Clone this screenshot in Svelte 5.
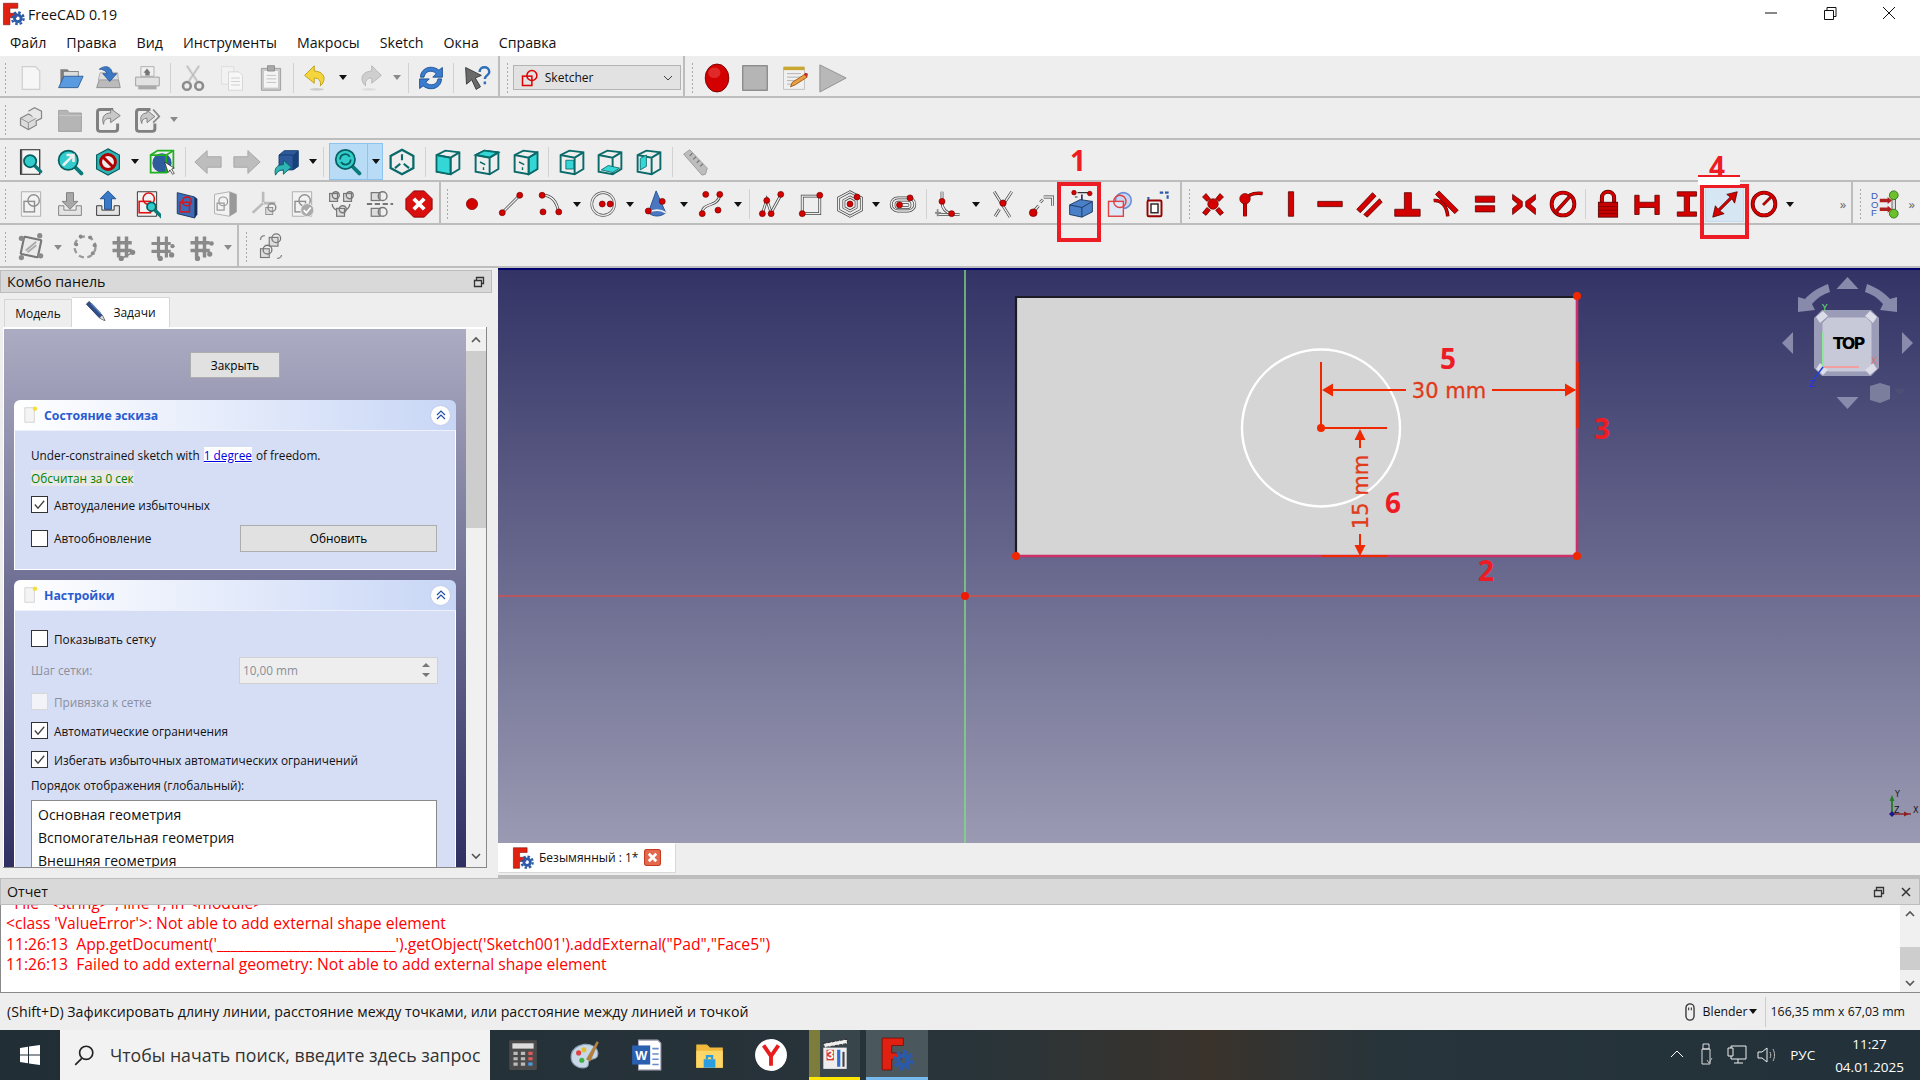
<script>
  const RED = '#d40000';
  const dot = (x, y, r = 3.4) =>
    `<circle cx="${x}" cy="${y}" r="${r}" fill="${RED}" stroke="#7a0000" stroke-width=".8"/>`;
  // sketch geometry: pale stroke with a dark rim
  const geo = (d) =>
    `<path d="${d}" fill="none" stroke="#444" stroke-width="3.2"/><path d="${d}" fill="none" stroke="#eee" stroke-width="1.6"/>`;
  const con = (d) => `<path d="${d}" fill="${RED}" stroke="#5a0000" stroke-width=".9"/>`;
  const conLine = (d, w = 3.4) =>
    `<path d="${d}" fill="none" stroke="#5a0000" stroke-width="${w + 1.2}"/><path d="${d}" fill="none" stroke="${RED}" stroke-width="${w}"/>`;

  const page = (extra = '', stroke = '#a8a8a8') =>
    `<path d="M5 2h22v28H5z" fill="#f2f2f2" stroke="${stroke}"/>${extra}`;
  const sketchMark = (c = '#8f8f8f', bg = 'none') =>
    `<rect x="8" y="13" width="12" height="12" fill="${bg}" stroke="${c}" stroke-width="1.6"/><circle cx="19" cy="12" r="6.5" fill="none" stroke="${c}" stroke-width="1.6"/>`;
  const lens = (x = 16, y = 14) =>
    `<path d="M${x + 5} ${y + 5}l7 7" stroke="#0a7a7a" stroke-width="4" stroke-linecap="round"/><circle cx="${x}" cy="${y}" r="7" fill="#3cc" stroke="#075f5f" stroke-width="2"/>`;
  const tealBox = (front, top, side) =>
    `<path d="M3 8 13 3l16 2v19l-10 6-16-3z" fill="#eee" stroke="#0a6a6a" stroke-width="2.2"/>` +
    (front ? `<path d="M3 8l16 3v19l-16-3z" fill="#35d6d6" stroke="#0a6a6a" stroke-width="1.8"/>` : '') +
    (top ? `<path d="M3 8 13 3l16 2-10 6z" fill="#35d6d6" stroke="#0a6a6a" stroke-width="1.8"/>` : '') +
    (side ? `<path d="M19 11l10-6v19l-10 6z" fill="#35d6d6" stroke="#0a6a6a" stroke-width="1.8"/>` : '') +
    `<path d="M3 8l16 3 10-6M19 11v19" fill="none" stroke="#0a6a6a" stroke-width="2.2"/>`;
  const gear = (cx, cy, r, fill) =>
    `<circle cx="${cx}" cy="${cy}" r="${r * 1.25}" fill="none" stroke="${fill}" stroke-width="${r * 0.5}" stroke-dasharray="${r * 0.55} ${r * 0.42}"/>` +
    `<circle cx="${cx}" cy="${cy}" r="${r * 0.72}" fill="none" stroke="${fill}" stroke-width="${r * 0.62}"/>`;
  const freecadLogo =
    `<path d="M2 1h20v7H11v7h9v6h-9v10H2z" fill="#e02010" stroke="#701008" stroke-width=".8"/>` + gear(22, 22, 6.5, '#2a5aa8');
  const hash = `<path d="M11 4v24M20 4v24M4 11h22M4 20h22" stroke="#8a8a8a" stroke-width="4"/>`;

  const ICONS = {
    new: `<path d="M6 3h15l5 5v21H6z" fill="#f6f6f6" stroke="#cfcfcf" stroke-width="1.4"/>`,
    open: `<path d="M5 6h8l2 2h11v18H5z" fill="#7d7d7d"/><path d="M9 9h16v6H9z" fill="#ddd"/><path d="M9 14h22l-6 13H3z" fill="#5a9ae0" stroke="#2c5a94"/>`,
    save: `<path d="M6 18h22l2 9H3z" fill="#bbb" stroke="#8b8b8b"/><path d="M7 10h20l1 8H5z" fill="#ddd" stroke="#aaa"/><path d="M6 6c6-5 14-4 15 5h5l-8 9-8-9h5c-1-3-5-5-9-5z" fill="#3a78c8" stroke="#1d4a8a" stroke-width=".8"/>`,
    print: `<path d="M9 3h15v11H9z" fill="#f0f0f0" stroke="#aaa"/><path d="M3 15h27v10H3z" fill="#e2e2e2" stroke="#999"/><path d="M6 25h21v4H6z" fill="#aaa"/><path d="M16 5l-4 5h8zM14 10h5v3h-5z" fill="#777"/>`,
    cut: `<path d="M9 2l12 18M23 2L11 20" stroke="#d8d8d8" stroke-width="3.4"/><path d="M9 2l12 18M23 2L11 20" fill="none" stroke="#aaa" stroke-width=".8"/><circle cx="9" cy="25" r="4.4" fill="none" stroke="#8c8c8c" stroke-width="3"/><circle cx="23" cy="25" r="4.4" fill="none" stroke="#8c8c8c" stroke-width="3"/>`,
    copy: `<path d="M4 3h14v20H4z" fill="#f2f2f2" stroke="#ddd"/><path d="M12 9h12l4 4v17H12z" fill="#f7f7f7" stroke="#d4d4d4"/><path d="M15 16h10M15 20h10M15 24h10" stroke="#ccc"/>`,
    paste: `<path d="M5 5h22v25H5z" fill="#c9c9c9" stroke="#999"/><path d="M8 8h16v19H8z" fill="#f4f4f4"/><path d="M12 2h8v6h-8z" fill="#aaa" stroke="#888"/><path d="M11 13h11M11 17h11M11 21h11" stroke="#bbb"/>`,
    undo: `<path d="M14 2 3 13l11 9v-6c5 0 8 3 7 9 6-5 7-16-7-17z" fill="#f4d63c" stroke="#b89a10"/><ellipse cx="17" cy="29" rx="8" ry="1.6" fill="#ccc"/>`,
    redo: `<path d="M18 2l11 11-11 9v-6c-5 0-8 3-7 9-6-5-7-16 7-17z" fill="#cfcfcf" stroke="#b5b5b5"/><ellipse cx="15" cy="29" rx="8" ry="1.6" fill="#ddd"/>`,
    refresh: `<path d="M4 15C4 5 16 0 25 7l4-3v11H18l4-4C17 6 9 8 8 15z" fill="#3a7cd0" stroke="#174a8c"/><path d="M28 17c0 10-12 15-21 8l-4 3V17h11l-4 4c5 5 13 3 14-4z" fill="#3a7cd0" stroke="#174a8c"/>`,
    whatsthis: `<path d="M3 4l18 9-7 3 6 10-5 3-5-11-6 5z" fill="#6a6a6a" stroke="#333"/><path d="M19 9c0-7 11-7 11 0 0 4-5 4-5 8M25 20v3" fill="none" stroke="#2f6fb8" stroke-width="2.8"/>`,

    record: `<ellipse cx="16" cy="16" rx="13.5" ry="16" fill="${RED}" stroke="#6e0000"/><ellipse cx="13" cy="10" rx="7" ry="6" fill="#e02a2a"/>`,
    stop: `<rect x="2" y="2" width="28" height="28" fill="#b5b5b5" stroke="#777" stroke-width="1.2"/>`,
    macro: `<path d="M4 4h24v25H4z" fill="#f0f0f0" stroke="#bbb"/><path d="M4 3h24v4H4z" fill="#c8a830"/><path d="M8 11h16M8 15h16M8 19h10M8 23h8" stroke="#aaa"/><path d="M12 26l2-5 14-9 3 3-14 9z" fill="#e8a040" stroke="#a05010"/><path d="M27 12l4 3 1-4-3-1z" fill="#c03020"/>`,
    play: `<path d="M1 1l30 15L1 32z" fill="#b8b8b8" stroke="#8c8c8c"/>`,

    part: `<path d="M4 14l9-5 9 5v8l-9 5-9-5z" fill="#dcdcdc" stroke="#888" stroke-width="1.4"/><path d="M13 6l7-4 8 4v8l-6 3" fill="#e8e8e8" stroke="#888" stroke-width="1.4"/><path d="M4 14l9 5 9-5M13 19v8" fill="none" stroke="#888"/>`,
    folder: `<path d="M3 5h10l2 3h14v21H3z" fill="#b5b5b5" stroke="#9c9c9c"/><path d="M3 11h26" stroke="#ccc"/>`,
    share: `<path d="M22 4H7a3 3 0 0 0-3 3v19a3 3 0 0 0 3 3h17a3 3 0 0 0 3-3v-6" fill="none" stroke="#808080" stroke-width="3.4"/><path d="M19 3l11 8-11 8v-5c-5 0-8 2-8 7-3-8 1-13 8-13z" fill="#c8c8c8" stroke="#777"/>`,
    share2: `<path d="M20 4H7a3 3 0 0 0-3 3v19a3 3 0 0 0 3 3h15a3 3 0 0 0 3-3v-6" fill="none" stroke="#808080" stroke-width="3.4"/><path d="M16 5l9 7-9 7v-5c-4 0-6 2-6 6-3-7 0-12 6-12z" fill="#c8c8c8" stroke="#777"/><path d="M23 4l7 8-7 7" fill="none" stroke="#888" stroke-width="2"/>`,

    fitall: `<path d="M4 2h22v28H4z" fill="#f4f4f4" stroke="#222" stroke-width="1.3"/><path d="M5 2v28" stroke="#555" stroke-width="2"/>` + lens(15, 15),
    fitsel: `<path d="M20 20l9 9" stroke="#0a7a7a" stroke-width="4.4" stroke-linecap="round"/><circle cx="14" cy="14" r="11" fill="#3cc" stroke="#075f5f" stroke-width="2"/><path d="M8 20 19 9M12 8h8v8" fill="none" stroke="#eee" stroke-width="3"/>`,
    nodraw: `<path d="M16 1l13 7v16l-13 7-13-7V8z" fill="#2fb5b5" stroke="#075f5f" stroke-width="1.4"/><circle cx="16" cy="16" r="8.5" fill="#eee" stroke="#b00000" stroke-width="3.4"/><path d="M10 10l12 12" stroke="#b00000" stroke-width="3.4"/>`,
    bbox: `<circle cx="16" cy="17" r="11" fill="#2f5c9c"/><path d="M3 8l8-5h18v19l-8 6H3z" fill="none" stroke="#1fb01f" stroke-width="2"/><path d="M3 8h18v20M21 8l8-5" fill="none" stroke="#1fb01f" stroke-width="2"/><path d="M19 16l4 12 2-3 3 5 2-1-3-5 3-1z" fill="#fff" stroke="#222" stroke-width=".8"/>`,
    back: `<path d="M1 16 15 3v7h16v12H15v7z" fill="#bdbdbd" stroke="#a2a2a2"/>`,
    fwd: `<path d="M31 16 17 3v7H1v12h16v7z" fill="#bdbdbd" stroke="#a2a2a2"/>`,
    blue3d: `<path d="M8 8l6-5h16v18l-6 4H8z" fill="#2d5a9a" stroke="#153a6e"/><path d="M8 8h16v17" fill="none" stroke="#153a6e"/><path d="M24 8l6-5v18l-6 4z" fill="#18407a"/><path d="M4 31c-2-8 2-12 9-12v-5l9 8-9 8v-5c-4 0-7 2-9 6z" fill="#2fb5b5" stroke="#075f5f"/>`,
    sync: `<path d="M20 20l9 9" stroke="#0a7a7a" stroke-width="4.4" stroke-linecap="round"/><circle cx="13" cy="13" r="11" fill="#3cc" stroke="#075f5f" stroke-width="2"/><path d="M7 13c0-6 8-8 11-3M19 13c0 6-8 8-11 3" fill="none" stroke="#075f5f" stroke-width="2"/>`,
    iso: `<path d="M16 2l13 7v14l-13 7-13-7V9z" fill="#eee" stroke="#0a6a6a" stroke-width="2.600"/><path d="M16 7v7M8 23l6-5M24 23l-6-5" stroke="#0a6a6a" stroke-width="2.400"/>`,
    c1: tealBox(true, false, false),
    c2: tealBox(false, true, false) + `<path d="M8 16l6 3M12 22v3" stroke="#0a6a6a" stroke-width="1.6"/>`,
    c3: tealBox(false, false, true) + `<path d="M8 16l6 3M12 22v3" stroke="#0a6a6a" stroke-width="1.6"/>`,
    c4: tealBox(false, false, false) + `<path d="M9 14h9v10H9z" fill="#35d6d6" stroke="#0a6a6a"/>`,
    c5: tealBox(false, false, false) + `<path d="M6 25l13 3 8-5-13-3z" fill="#35d6d6" stroke="#0a6a6a"/>`,
    c6: tealBox(false, false, false) + `<path d="M6 12v13l7-4V8z" fill="#35d6d6" stroke="#0a6a6a"/>`,
    ruler: `<path d="M3 7l7-5 20 21-2 7-4 1z" fill="#bdbdbd" stroke="#999"/><path d="M13 6l-3 3M17 10l-3 3M21 14l-3 3M25 18l-3 3" stroke="#777" stroke-width="1.4"/>`,

    skNew: page(sketchMark()),
    skLeave: `<path d="M12 3h8v10h5l-9 9-9-9h5z" fill="#a8a8a8" stroke="#777"/><path d="M3 18v11h26V18h-6v5H9v-5z" fill="#e4e4e4" stroke="#777"/>`,
    skUp: `<path d="M16 1l9 9h-5v12h-8V10H7z" fill="#3a78c8" stroke="#174a8c"/><path d="M3 18v11h26V18h-6v5H9v-5z" fill="#e4e4e4" stroke="#222"/>`,
    skFit: page(`<rect x="7" y="13" width="13" height="13" fill="none" stroke="#e01010" stroke-width="1.8"/><circle cx="18" cy="10" r="6.5" fill="none" stroke="#e01010" stroke-width="1.8"/>` + lens(21, 19).replace(/r="7"/, 'r="5"'), '#222'),
    skPlane: `<path d="M6 3l20 5v24L6 27z" fill="#3a6cb8" stroke="#16315a"/><path d="M26 8l3 2v18l-3 4z" fill="#16315a"/><rect x="9" y="14" width="11" height="11" fill="none" stroke="#e01010" stroke-width="1.6"/><circle cx="17" cy="13" r="5" fill="none" stroke="#e01010" stroke-width="1.6"/>`,
    skBox: `<path d="M4 5l17-3 8 3v20l-8 5-17-3z" fill="#f2f2f2" stroke="#aaa"/><path d="M21 2v28l8-5V5z" fill="#999"/><rect x="7" y="15" width="8" height="8" fill="none" stroke="#999" stroke-width="1.4"/><circle cx="14" cy="13" r="5" fill="none" stroke="#999" stroke-width="1.4"/>`,
    skRay: `<path d="M15 2v12M15 15L3 26M16 15h13" stroke="#bbb" stroke-width="3"/><rect x="18" y="20" width="8" height="8" fill="#ddd" stroke="#888"/><circle cx="25" cy="20" r="4.5" fill="none" stroke="#888" stroke-width="1.6"/>`,
    skValid: page(sketchMark() + `<circle cx="22" cy="23" r="7.5" fill="#aaa" stroke="#eee"/><path d="M18 23l3 3 5-6" fill="none" stroke="#fff" stroke-width="2"/>`),
    skMerge: `<rect x="3" y="4" width="9" height="9" fill="#ddd" stroke="#777" stroke-width="1.4"/><circle cx="10" cy="6" r="4" fill="none" stroke="#777" stroke-width="1.6"/><rect x="19" y="4" width="9" height="9" fill="#ddd" stroke="#777" stroke-width="1.4"/><circle cx="26" cy="6" r="4" fill="none" stroke="#777" stroke-width="1.6"/><rect x="11" y="21" width="9" height="9" fill="#ddd" stroke="#777" stroke-width="1.4"/><circle cx="18" cy="22" r="4" fill="none" stroke="#777" stroke-width="1.6"/><path d="M6 16c0 4 3 6 5 7M26 16c0 4-3 6-5 7" fill="none" stroke="#777" stroke-width="1.6"/>`,
    skMirror: `<rect x="6" y="3" width="10" height="9" fill="#ddd" stroke="#777" stroke-width="1.4"/><circle cx="19" cy="7" r="5" fill="none" stroke="#777" stroke-width="1.6"/><path d="M1 16h30" stroke="#777" stroke-width="2.4" stroke-dasharray="6 3"/><rect x="6" y="21" width="10" height="9" fill="#ddd" stroke="#777" stroke-width="1.4"/><circle cx="19" cy="25" r="5" fill="none" stroke="#777" stroke-width="1.6"/>`,
    skClose: `<path d="M10 1h12l9 9v12l-9 9H10l-9-9V10z" fill="#d81010" stroke="#800"/><path d="M10 10l12 12M22 10 10 22" stroke="#fff" stroke-width="4.4"/>`,

    point: dot(16, 16, 6.4),
    line: geo('M6 26 26 6') + dot(6, 26) + dot(26, 6),
    arc: geo('M8 6c10 0 16 8 18 20') + dot(7, 6) + dot(26, 25) + dot(8, 25),
    circle: `<circle cx="15" cy="16" r="13" fill="none" stroke="#555" stroke-width="3"/><circle cx="15" cy="16" r="13" fill="none" stroke="#eee" stroke-width="1.6"/>` + dot(14, 16) + dot(23, 16),
    cone: `<path d="M15 1 6 26c6 5 14 5 20 0z" fill="#4a78c0" stroke="#1d4a8a"/><path d="M6 26c6-4 14-4 20 0" fill="none" stroke="#eee" stroke-width="2"/>` + dot(6, 24) + dot(22, 13),
    bspline: geo('M6 26c0-12 18-6 20-20') + dot(10, 5) + dot(26, 5) + dot(6, 27) + dot(24, 23),
    polyline: geo('M5 27 10 11l5 15L26 6') + dot(10, 12) + dot(5, 27) + dot(15, 27) + dot(26, 5),
    rect: geo('M6 7h20v20H6z') + dot(26, 6) + dot(6, 27),
    polygon: geo('M16 2l13 7v14l-13 7-13-7V9z') + geo('M16 8l7 4v8l-7 4-7-4v-8z') + dot(16, 16) + dot(24, 8),
    slot: geo('M10 9h12a7 7 0 0 1 0 15H10a7 7 0 0 1 0-15z') + geo('M11 14h10a3 3 0 0 1 0 6H11a3 3 0 0 1 0-6z') + dot(12, 17) + dot(24, 9),
    fillet: geo('M8 2v12M4 28h24') + geo('M8 14c0 8 5 12 12 14') + dot(8, 13) + dot(19, 27) + `<path d="M3 22v8M0 26h7" stroke="#888" stroke-width="2"/>`,
    trim: geo('M6 2l18 29M26 2 16 17M12 22l-5 8') + dot(16, 15, 3.6),
    extend: geo('M18 8h10v10') + geo('M7 24l5-6') + geo('M14 14l3-3') + dot(6, 26, 4.4),
    external: `<path d="M12 3h14M9 8h3" stroke="#333" stroke-width="1.4"/>` + dot(8, 3, 2.6) + dot(26, 4, 2.6) + `<path d="M17 5v7" stroke="#336" stroke-width="2"/><path d="M3 17l12-6 14 2v12l-12 6-14-3z" fill="#4a80c8" stroke="#16315a"/><path d="M3 17l14 3 12-7M17 20v11" fill="none" stroke="#16315a"/>`,
    carbon: `<circle cx="21" cy="12" r="9" fill="#c8d8f4" stroke="#6a8ed8" stroke-width="1.8"/><rect x="4" y="13" width="17" height="17" fill="#dde8f8" stroke="#e04040" stroke-width="1.6"/><circle cx="17" cy="13" r="7" fill="none" stroke="#e04040" stroke-width="1.6"/>`,
    toGeo: `<path d="M18 3h9v9M5 12V6" fill="none" stroke="#2a5aa8" stroke-width="2.4" stroke-dasharray="4 2"/><rect x="4" y="12" width="16" height="18" rx="1.5" fill="#eee" stroke="#990000" stroke-width="2.2"/><rect x="8" y="16" width="8" height="10" fill="#fff" stroke="#222" stroke-width="1.6"/>`,

    coincident: `<path d="M4 8l4-4 5 6-4 3zM28 8l-4-4-5 6 4 3zM4 26l4 3 5-6-4-3zM28 26l-4 3-5-6 4-3z" fill="${RED}" stroke="#5a0000" stroke-width=".8"/>` + dot(16, 16, 6),
    pointOn: conLine('M8 30V12', 3.4) + `<path d="M8 12c4-8 11-9 20-8" fill="none" stroke="#5a0000" stroke-width="4"/><path d="M8 12c4-8 11-9 20-8" fill="none" stroke="${RED}" stroke-width="2.8"/>` + dot(8, 10, 6),
    vertical: con('M13 2h6v28h-6z'),
    horizontal: con('M2 13h28v6H2z'),
    parallel: con('M2 22 20 3l4 4L6 26zM10 28l18-18 3 4-17 17z'),
    perp: con('M13 3h8v19h10v8H2v-8h11z'),
    tangent: con('M4 5l4-4 22 22-4 4z') + `<path d="M2 12c9-1 15 7 16 18" fill="none" stroke="#5a0000" stroke-width="4"/><path d="M2 12c9-1 15 7 16 18" fill="none" stroke="${RED}" stroke-width="2.6"/>`,
    equal: con('M5 7h22v7H5zM5 18h22v7H5z'),
    symmetry: con('M3 5l11 8v6L3 28v-7l6-5-6-5zM29 5l-11 8v6l11 9v-7l-6-5 6-5z'),
    block: `<circle cx="16" cy="16" r="13" fill="none" stroke="#5a0000" stroke-width="4.4"/><circle cx="16" cy="16" r="13" fill="none" stroke="${RED}" stroke-width="3"/>` + conLine('M7 26 25 6', 2.8),
    lock: `<path d="M9 15V9a7 7 0 0 1 14 0v6" fill="none" stroke="#5a0000" stroke-width="4.6"/><path d="M9 15V9a7 7 0 0 1 14 0v6" fill="none" stroke="${RED}" stroke-width="3"/><rect x="5" y="14" width="22" height="17" fill="#c80000" stroke="#5a0000"/><path d="M6 19h20M6 23h20M6 27h20" stroke="#7a0000"/>`,
    hdist: con('M2 6h5v8h18V6h5v22h-5v-8H7v8H2z'),
    vdist: con('M6 2h22v5h-8v18h8v5H6v-5h8V7H6z'),
    dist: con('M30 2 27 15l-3-5L10 24l5 3L2 31l3-13 3 4L22 8l-4-3z'),
    radius: `<circle cx="16" cy="16" r="13" fill="none" stroke="#5a0000" stroke-width="4.4"/><circle cx="16" cy="16" r="13" fill="none" stroke="${RED}" stroke-width="3"/>` + conLine('M15 17 24 8', 2),

    dof: `<text x="0" y="10" class="doft">D</text><text x="0" y="20" class="doft">O</text><text x="0" y="30" class="doft">F</text><path d="M26 6v22" stroke="#555" stroke-width="5"/><path d="M26 6v22" stroke="#ddd" stroke-width="3"/><path d="M10 10h9v-2l5 4-5 4v-2h-9zM10 20h9v-2l5 4-5 4v-2h-9z" fill="#b02020"/><circle cx="26" cy="6" r="5" fill="#6cc02c" stroke="#2f7010"/><circle cx="26" cy="27" r="5" fill="#6cc02c" stroke="#2f7010"/>`,

    validate: `<rect x="6" y="6" width="20" height="20" rx="1" transform="rotate(12 16 16)" fill="#eaeaea" stroke="#777" stroke-width="2.400"/><path d="M10 20 22 10M12 22l10-8" stroke="#aaa" stroke-width="2"/>` + [[5, 6], [26, 3], [5, 28], [27, 26]].map(([x, y]) => `<circle cx="${x}" cy="${y}" r="3" fill="#8a8a8a"/>`).join(''),
    bCurve: `<circle cx="16" cy="16" r="12" fill="none" stroke="#999" stroke-width="2.6" stroke-dasharray="6 4"/>` + [[11, 4], [22, 5], [27, 14], [25, 23], [6, 13]].map(([x, y]) => `<circle cx="${x}" cy="${y}" r="2.2" fill="#888"/>`).join(''),
    hashA: hash + `<circle cx="27" cy="22" r="3" fill="#888"/><circle cx="14" cy="29" r="3" fill="#888"/><path d="M16 28l10-5" stroke="#888" stroke-width="1.6"/>`,
    hashB: `<path d="M12 4v24M21 4v24M4 12h22M4 21h22" stroke="#8a8a8a" stroke-width="3.6"/><circle cx="27" cy="25" r="3" fill="#888"/><circle cx="14" cy="29" r="3" fill="#888"/><circle cx="28" cy="15" r="2.400" fill="#888"/>`,
    hashC: hash + `<circle cx="28" cy="12" r="2.6" fill="#888"/><circle cx="26" cy="24" r="3" fill="#888"/><circle cx="12" cy="29" r="3" fill="#888"/>`,
    skCopy: `<path d="M4 8c0-3 2-5 5-5M28 25c0 2-2 4-5 4" fill="none" stroke="#888" stroke-width="1.6"/><rect x="14" y="5" width="10" height="10" fill="#ddd" stroke="#777" stroke-width="1.3"/><circle cx="22" cy="6" r="5" fill="none" stroke="#777" stroke-width="1.5"/><rect x="4" y="18" width="10" height="10" fill="#ddd" stroke="#777" stroke-width="1.3"/><circle cx="12" cy="19" r="5" fill="none" stroke="#777" stroke-width="1.5"/>`,

    logo: freecadLogo,
    wrench: `<path d="M6 2 2 6l19 20 8 4-4-8z" fill="#2f4f8a" stroke="#16284e"/><path d="M21 26l8 4-4-8z" fill="#e4e4e4" stroke="#555" stroke-width=".6"/><path d="M9 5 23 20" stroke="#5c7cb8" stroke-width="2"/>`,
    sheet: `<path d="M5 3h17v26H5z" fill="#f4f4f4" stroke="#bbb"/><circle cx="23" cy="5" r="4" fill="#f4e03c"/>`
  };

  // plain names are 39px buttons; g grip, s thin separator, e toolbar end, a dropdown arrow
  const toolbars = [
    ['g', 'new', 'open', 'save', 'print', 's', 'cut', 'copy', 'paste', 's', 'undo', 'a', 'redo', 'ag', 's', 'refresh', 's', 'whatsthis', 'e', 'g', 'combo', 'e', 'g', 'record', 'stop', 'macro', 'play'],
    ['g', 'part', 'folder', 'share', 'share2', 'ag'],
    ['g', 'fitall', 'fitsel', 'nodraw', 'a', 'bbox', 's', 'back', 'fwd', 'blue3d', 'a', 's', 'active', 'iso', 's', 'c1', 'c2', 'c3', 's', 'c4', 'c5', 'c6', 's', 'ruler'],
    ['g', 'skNew', 'skLeave', 'skUp', 'skFit', 'skPlane', 'skBox', 'skRay', 'skValid', 'skMerge', 'skMirror', 'skClose', 'ex', 'g',
     'point', 'line', 'arc', 'a', 'circle', 'a', 'cone', 'a', 'bspline', 'a', 's', 'polyline', 'rect', 'polygon', 'a', 'slot', 's', 'fillet', 'a', 'trim', 'extend', 'external', 'carbon', 'toGeo', 'e', 'g',
     'coincident', 'pointOn', 'vertical', 'horizontal', 'parallel', 'perp', 'tangent', 'equal', 'symmetry', 'block', 's', 'lock', 'hdist', 'vdist', 'distOn', 'radius', 'a', 'more', 'e', 'g', 'dof', 'more2'],
    ['g', 'validate', 'ag', 'bCurve', 'hashA', 'hashB', 'hashC', 'ag', 'e', 'g', 'skCopy']
  ];

  const tokenKind = (t) => (['g', 's', 'e', 'ex', 'a', 'ag', 'combo', 'active', 'more', 'more2', 'distOn'].includes(t) ? t : 'b');

  const menu = ['Файл', 'Правка', 'Вид', 'Инструменты', 'Макросы', 'Sketch', 'Окна', 'Справка'];
</script>

{#snippet icon(name)}
  <svg class="ico" viewBox="0 0 32 32">{@html ICONS[name]}</svg>
{/snippet}

{#snippet check(on = false, dim = false)}
  <span class="cb" class:dim>
    {#if on}<svg viewBox="0 0 16 16"><path d="M3 8l3.4 4L13 4" fill="none" stroke="#444" stroke-width="1.4" /></svg>{/if}
  </span>
{/snippet}

{#snippet boxHead(title)}
  <div class="box-head">
    <svg class="sheet" viewBox="0 0 32 32">{@html ICONS.sheet}</svg>
    <span>{title}</span>
    <span class="fold">
      <svg viewBox="0 0 12 12"><path d="M2 6l4-4 4 4M2 10l4-4 4 4" fill="none" stroke="#1f4ea8" stroke-width="1.2" /></svg>
    </span>
  </div>
{/snippet}

<div class="app">
  <header class="title">
    <svg class="title-logo" viewBox="0 0 32 32">{@html ICONS.logo}</svg>
    <span>FreeCAD 0.19</span>
    <div class="win">
      <svg viewBox="0 0 16 16"><path d="M2 8h12" stroke="#111" /></svg>
      <svg viewBox="0 0 16 16"><path d="M2.5 5.5h9v9h-9zM5 5.5V2.500h9v9h-2.500" fill="none" stroke="#111" /></svg>
      <svg viewBox="0 0 16 16"><path d="M2 2l12 12M14 2 2 14" stroke="#111" /></svg>
    </div>
  </header>

  <nav class="menu">
    {#each menu as m}<span>{m}</span>{/each}
  </nav>

  <div class="bars">
    {#each toolbars as bar}
      <div class="bar">
        {#each bar as t}
          {@const k = tokenKind(t)}
          {#if k === 'g'}<i class="grip"></i>
          {:else if k === 's'}<i class="sep"></i>
          {:else if k === 'e'}<i class="end"></i>
          {:else if k === 'ex'}<i class="end short"></i>
          {:else if k === 'a'}<i class="arrow"></i>
          {:else if k === 'ag'}<i class="arrow grey"></i>
          {:else if k === 'combo'}
            <div class="combo">
              <svg viewBox="0 0 32 32">{@html `<rect x="4" y="13" width="15" height="15" fill="none" stroke="#d00" stroke-width="2.4"/><circle cx="19" cy="12" r="8" fill="none" stroke="#d00" stroke-width="2.4"/>`}</svg>
              <span>Sketcher</span>
              <svg class="chev" viewBox="0 0 12 12"><path d="M2 4l4 4 4-4" fill="none" stroke="#444" /></svg>
            </div>
          {:else if k === 'active'}
            <div class="sync"><span class="btn">{@render icon('sync')}</span><i class="arrow"></i></div>
          {:else if k === 'distOn'}
            <span class="btn pressed">{@render icon('dist')}</span>
          {:else if k === 'more'}
            <span class="more">»</span>
          {:else if k === 'more2'}
            <span class="more tight">»</span>
          {:else}
            <span class="btn">{@render icon(t)}</span>
          {/if}
        {/each}
      </div>
    {/each}
  </div>

  <div class="main">
    <aside class="combo-panel">
      <div class="dock">
        <span>Комбо панель</span>
        <svg viewBox="0 0 12 12"><path d="M1.500 4.500h7v6h-7zM3.500 4.500v-3h7v6h-2" fill="none" stroke="#333" stroke-width="1.300" /></svg>
      </div>
      <div class="tabs">
        <span class="tab">Модель</span>
        <span class="tab on"><svg viewBox="0 0 32 32">{@html ICONS.wrench}</svg>Задачи</span>
      </div>
      <div class="task-frame">
        <div class="task">
          <button class="close">Закрыть</button>

          <section class="box">
            {@render boxHead('Состояние эскиза')}
            <div class="box-body first">
              <p class="line">Under-constrained sketch with <a href="#dof">1 degree</a> of freedom.</p>
              <p class="line"><span class="ok">Обсчитан за 0 сек</span></p>
              <div class="opt">{@render check(true)}Автоудаление избыточных</div>
              <div class="opt split tall">
                <span class="opt-in">{@render check()}Автообновление</span>
                <button class="update">Обновить</button>
              </div>
            </div>
          </section>

          <section class="box">
            {@render boxHead('Настройки')}
            <div class="box-body second">
              <div class="opt">{@render check()}Показывать сетку</div>
              <div class="opt split muted spinrow">
                <span>Шаг сетки:</span>
                <span class="spin">10,00 mm<span class="spin-btns"><i></i><i></i></span></span>
              </div>
              <div class="opt muted">{@render check(false, true)}Привязка к сетке</div>
              <div class="opt">{@render check(true)}Автоматические ограничения</div>
              <div class="opt">{@render check(true)}Избегать избыточных автоматических ограничений</div>
              <div class="order">Порядок отображения (глобальный):</div>
              <ul class="list">
                <li>Основная геометрия</li>
                <li>Вспомогательная геометрия</li>
                <li>Внешняя геометрия</li>
              </ul>
            </div>
          </section>
        </div>
        <div class="scroll">
          <svg viewBox="0 0 12 8"><path d="M2 6l4-4 4 4" fill="none" stroke="#555" stroke-width="1.600" /></svg>
          <div class="thumb"></div>
          <svg class="down" viewBox="0 0 12 8"><path d="M2 2l4 4 4-4" fill="none" stroke="#555" stroke-width="1.600" /></svg>
        </div>
      </div>
    </aside>

    <div class="view-col">
      <div class="viewport">
        <!-- the sketch is a canvas, its geometry sits at its own coordinates -->
        <svg class="scene" viewBox="0 0 1422 573">
          <g transform="translate(-498 -270)">
            <path d="M965 270v573" stroke="#7fe07f" stroke-width="1.400" />
            <path d="M498 596h1422" stroke="#d05050" stroke-width="1.400" />
            <circle cx="965" cy="596" r="4" fill="#f01a00" />
            <path d="M1017 297h560v259H1017z" fill="#d5d5d5" />
            <path d="M1016 556V297h561" fill="none" stroke="#1c1c24" stroke-width="2.200" />
            <path d="M1577 297v259H1016" fill="none" stroke="#cc3068" stroke-width="2.600" />
            <ellipse cx="1321" cy="428" rx="79" ry="78.500" fill="none" stroke="#fff" stroke-width="2.400" />
            <g stroke="#f02800" stroke-width="2" fill="none">
              <path d="M1321 362v66h66M1321 556h66" />
              <path d="M1577.500 362v66" stroke-width="2.600" />
              <path d="M1325 390h81M1492 390h83" />
              <path d="M1360 432v16M1360 534v20" />
            </g>
            <g fill="#f02800">
              <path d="M1322 390l11-6.500v13zM1576 390l-11-6.500v13z" />
              <path d="M1360 429l-5.500 11h11zM1360 556l-5.500-11h11z" />
              <circle cx="1321" cy="428" r="4" />
              <circle cx="1577" cy="296" r="4" />
              <circle cx="1016" cy="556" r="4" />
              <circle cx="1577" cy="556" r="4" />
            </g>
            <text x="1449" y="398" class="dim" text-anchor="middle">30 mm</text>
            <text class="dim" text-anchor="middle" transform="translate(1368 492) rotate(-90)">15 mm</text>
          </g>
        </svg>

        <svg class="navi" viewBox="0 0 140 140">
          <g fill="#8d8fb0" opacity=".95">
            <path d="M67.500 3l11 12h-22z" />
            <path d="M67.500 135l11-12h-22z" />
            <path d="M2 69 13 58v22z" />
            <path d="M133 69 122 58v22z" />
            <path d="M18 38V23l7 2C31 18 40 13 48 10l2 8C43 20 37 24 32 30l3 6z" />
            <path d="M117 38V23l-7 2C104 18 95 13 87 10l-2 8c7 2 13 6 18 12l-3 6z" />
          </g>
          <path d="M42 36h49l8 8v50l-8 8H42l-8-8V44z" fill="#9a9cb8" />
          <path d="M48 43h38l6 6v43l-6 6H48l-6-6V49z" fill="#c8c9d8" stroke="#9a9cb8" />
          <path d="M36 43l7-6 5 5-8 7zM97 43l-7-6-5 5 8 7zM36 95l7 6 5-5-8-7zM97 95l-7 6-5-5 8-7z" fill="#dcdde8" />
          <text x="68" y="75" class="top" text-anchor="middle">TOP</text>
          <path d="M43 93V58" stroke="#8fe89a" stroke-width="2" />
          <path d="M43 93h36" stroke="#f0a0a0" stroke-width="2" />
          <path d="M43 93l-9 12" stroke="#2040e0" stroke-width="1.500" />
          <text x="29" y="113" class="ax" fill="#2030f0">Z</text>
          <text x="42" y="37" class="ax" fill="#70e070">Y</text>
          <text x="91" y="90" class="ax" fill="#e07070">X</text>
          <path d="M90 112l10-3 10 3v13l-10 4-10-3z" fill="#7c7e9e" />
          <path d="M114 115h12l-6 6z" fill="#4d4f74" />
        </svg>

        <svg class="axes" viewBox="0 0 34 34">
          <path d="M6 26V9" stroke="#208020" stroke-width="1.800" />
          <path d="M6 7l-2.500 6h5z" fill="#208020" />
          <path d="M6 26h19" stroke="#8c2020" stroke-width="1.400" />
          <path d="M18 23.500v5l5-2.500z" fill="#8c2020" />
          <path d="M6 23l3 3-3 3-3-3z" fill="#1a1a88" />
          <text x="9" y="9" class="axk">Y</text>
          <text x="8" y="25" class="axk">Z</text>
          <text x="27" y="25" class="axk">X</text>
        </svg>
      </div>
      <div class="doc-tabs">
        <div class="doc-tab">
          <svg viewBox="0 0 32 32">{@html ICONS.logo}</svg>
          <span>Безымянный : 1*</span>
          <svg class="doc-x" viewBox="0 0 16 16"><rect x=".5" y=".5" width="15" height="15" rx="2" fill="#e2694d" stroke="#c43b22" /><path d="M4.500 4.500l7 7M11.500 4.500l-7 7" stroke="#fff" stroke-width="2.600" /></svg>
        </div>
      </div>
    </div>
  </div>

  <div class="report">
    <div class="dock wide">
      <span>Отчет</span>
      <svg viewBox="0 0 12 12"><path d="M1.500 4.500h7v6h-7zM3.500 4.500v-3h7v6h-2" fill="none" stroke="#333" stroke-width="1.300" /></svg>
      <svg viewBox="0 0 12 12"><path d="M2 2l8 8M10 2l-8 8" stroke="#333" stroke-width="1.500" /></svg>
    </div>
    <div class="log">
      <div class="log-text">
        <div>&nbsp;&nbsp;File "&lt;string&gt;", line 1, in &lt;module&gt;</div>
        <div>&lt;class 'ValueError'&gt;: Not able to add external shape element</div>
        <div>11:26:13&nbsp; App.getDocument('__________________________').getObject('Sketch001').addExternal("Pad","Face5")</div>
        <div>11:26:13&nbsp; Failed to add external geometry: Not able to add external shape element</div>
      </div>
      <div class="log-scroll">
        <svg viewBox="0 0 12 8"><path d="M2 6l4-4 4 4" fill="none" stroke="#555" stroke-width="1.600" /></svg>
        <div class="log-thumb"></div>
        <svg viewBox="0 0 12 8"><path d="M2 2l4 4 4-4" fill="none" stroke="#555" stroke-width="1.600" /></svg>
      </div>
    </div>
  </div>

  <footer class="status">
    <span>(Shift+D) Зафиксировать длину линии, расстояние между точками, или расстояние между линией и точкой</span>
    <div class="status-right">
      <svg class="mouse" viewBox="0 0 12 20"><rect x="1.500" y="1" width="9" height="18" rx="4.500" fill="none" stroke="#333" stroke-width="1.500" /><path d="M4.500 5v3M7.500 5v3" stroke="#333" stroke-width="1.200" /></svg>
      <span class="blender">Blender<i class="arrow"></i></span>
      <i class="st-sep"></i>
      <span>166,35 mm x 67,03 mm</span>
    </div>
  </footer>

  <div class="taskbar">
    <svg class="start" viewBox="0 0 20 20"><path d="M0 3l8-1.200v7.700H0zM9 1.600 20 0v9.500H9zM0 10.500h8v7.700L0 17zM9 10.500h11V20L9 18.400z" fill="#fff" /></svg>
    <div class="search">
      <svg viewBox="0 0 20 20"><circle cx="12" cy="8" r="6" fill="none" stroke="#222" stroke-width="1.500" /><path d="M8 13 2 19" stroke="#222" stroke-width="1.500" /></svg>
      <span>Чтобы начать поиск, введите здесь запрос</span>
    </div>
    <div class="apps">
      <span class="app-i"><svg viewBox="0 0 32 32"><rect x="3" y="2" width="26" height="28" rx="1" fill="#4a4a4a" /><rect x="6" y="5" width="20" height="5" fill="#ddd" /><path d="M7 13h4v3H7zM14 13h4v3h-4zM7 18h4v3H7zM14 18h4v3h-4zM7 23h4v3H7zM14 23h4v3h-4z" fill="#bbb" /><path d="M21 13h4v3h-4zM21 18h4v3h-4z" fill="#e05a5a" /><path d="M21 23h4v3h-4z" fill="#4a9ae0" /></svg></span>
      <span class="app-i"><svg viewBox="0 0 32 32"><path d="M15 6c8-1 14 4 13 10-1 5-6 3-8 5-2 3 1 6-4 7C8 29 2 24 3 16 4 10 9 7 15 6z" fill="#c8d8e8" stroke="#8aa0b4" /><circle cx="10" cy="14" r="2.400" fill="#e04040" /><circle cx="13" cy="21" r="2.400" fill="#40b040" /><circle cx="15" cy="11" r="2.400" fill="#e0c030" /><path d="M17 20 27 3l2 1-8 18z" fill="#b08040" /></svg></span>
      <span class="app-i"><svg viewBox="0 0 32 32"><path d="M8 2h18l3 3v25H8z" fill="#fff" stroke="#aab" /><path d="M2 7h17v18H2z" fill="#2b5fb0" /><text x="10.500" y="21" class="wd" text-anchor="middle">W</text><path d="M21 10h6M21 15h6M21 20h6M21 25h6" stroke="#6a8cc8" stroke-width="1.500" /></svg></span>
      <span class="app-i"><svg viewBox="0 0 32 32"><path d="M4 6h10l3 3h12v19H4z" fill="#f0b93c" /><path d="M4 12h25v16H4z" fill="#fcd667" /><path d="M11 20h11v8H11z" fill="#2a9de0" /><path d="M14 20v-3h5v3" fill="none" stroke="#2a9de0" stroke-width="2" /></svg></span>
      <span class="app-i"><svg viewBox="0 0 32 32"><circle cx="16" cy="16" r="15" fill="#fff" /><path d="M9 7l7 10 7-10M16 17v9" fill="none" stroke="#e81c1c" stroke-width="3.600" /></svg></span>
      <span class="app-i player"><svg viewBox="0 0 32 32"><path d="M5 6l22-4 1 4-22 4z" fill="#eee" stroke="#333" stroke-dasharray="3 1" /><rect x="5" y="10" width="22" height="20" fill="#eee" /><path d="M8 12h7v10H8z" fill="#d94030" /><path d="M18 12h3v16h-3z" fill="#2f6fd0" /><path d="M23 14h2v14h-2z" fill="#444" /><text x="11.500" y="21" class="mp" text-anchor="middle">3</text></svg></span>
      <span class="app-i fc"><svg viewBox="0 0 32 32">{@html ICONS.logo}</svg></span>
    </div>
    <div class="tray">
      <svg viewBox="0 0 14 14" class="tr-caret"><path d="M1 9l6-6 6 6" fill="none" stroke="#fff" /></svg>
      <svg viewBox="0 0 14 24" class="tr-usb"><path d="M4 1h6v5H4zM3 6h8v15H3z" fill="none" stroke="#ddd" /><path d="M8 17l2 3 3-5" fill="none" stroke="#bbb" /></svg>
      <svg viewBox="0 0 22 22" class="tr-net"><path d="M5 2h15v13H5zM12 15v4M8 19h9" fill="none" stroke="#eee" /><path d="M2 4h5v8H2z" fill="#243036" stroke="#eee" /></svg>
      <svg viewBox="0 0 22 22" class="tr-vol"><path d="M2 8h4l5-4v14l-5-4H2z" fill="none" stroke="#eee" /><path d="M14 8c1 2 1 4 0 6M17 5c2 4 2 8 0 12" fill="none" stroke="#bbb" /></svg>
      <span class="lang">РУС</span>
      <div class="clock"><span>11:27</span><span>04.01.2025</span></div>
    </div>
  </div>

  <!-- annotations painted over the screenshot -->
  <div class="mark box-1"></div>
  <div class="mark box-4"></div>
  <div class="cap4-strip"></div>
  <span class="num" style="left:1070px;top:142px">1</span>
  <span class="num" style="left:1709px;top:148px">4</span>
  <span class="num" style="left:1440px;top:340px">5</span>
  <span class="num" style="left:1594px;top:410px">3</span>
  <span class="num" style="left:1385px;top:484px">6</span>
  <span class="num" style="left:1478px;top:552px">2</span>
</div>

<style>
  :global(body) {
    margin: 0;
    background: #eee;
  }

  .app {
    position: relative;
    width: 1920px;
    height: 1080px;
    overflow: hidden;
    display: flex;
    flex-direction: column;
    font-family: 'Open Sans', 'Noto Sans', sans-serif;
    font-size: 13px;
    color: #111;
    background: #eee;
  }

  svg {
    display: block;
  }

  p {
    margin: 0;
  }

  /* title + menu */
  .title {
    height: 28px;
    display: flex;
    align-items: center;
    background: #fff;
    font-size: 14.200px;
    padding-left: 2px;
  }

  .title-logo {
    width: 23px;
    height: 24px;
    margin-right: 3px;
  }

  .win {
    margin-left: auto;
    display: flex;
    gap: 43px;
    padding-right: 23px;
    padding-bottom: 2px;
  }

  .win svg {
    width: 16px;
    height: 16px;
  }

  .menu {
    height: 28px;
    display: flex;
    align-items: center;
    gap: 20px;
    padding-left: 10px;
    background: #fff;
    font-size: 14.200px;
  }

  /* toolbars */
  .bars {
    display: flex;
    flex-direction: column;
  }

  .bar {
    height: 42px;
    box-sizing: border-box;
    padding-top: 3px;
    display: flex;
    align-items: center;
    border-bottom: 2px solid #bdbdbd;
    background: #eee;
    position: relative;
  }

  .bar:nth-child(n + 4) {
    height: 43px;
  }

  .grip {
    width: 3px;
    height: 32px;
    margin-left: 4px;
    margin-right: 4.500px;
    background: radial-gradient(circle, #aaa 0.8px, transparent 1px) 0 0 / 3px 4px;
    flex: none;
  }

  .end + .grip {
    margin-left: 5px;
    margin-right: 3.500px;
  }

  .btn {
    width: 38.800px;
    height: 36px;
    display: flex;
    align-items: center;
    justify-content: center;
    flex: none;
    box-sizing: border-box;
  }

  .ico {
    width: 28px;
    height: 30px;
  }

  .pressed {
    background: #d6e6f3;
    box-shadow: inset 0 0 0 1px #c4dcf0;
  }

  .sep {
    width: 1px;
    height: 30px;
    margin: 0 3px;
    background: #d2d2d2;
    flex: none;
  }

  .end {
    width: 2px;
    align-self: stretch;
    margin: -3px 1px 0 2px;
    background: #bdbdbd;
    flex: none;
  }

  .end.short {
    margin: -3px 0 0 1px;
  }

  .arrow {
    width: 0;
    height: 0;
    margin: 0 3.500px;
    border-left: 4px solid transparent;
    border-right: 4px solid transparent;
    border-top: 5px solid #111;
    flex: none;
  }

  .arrow.grey {
    border-top-color: #8a8a8a;
  }

  .combo {
    width: 168px;
    height: 25px;
    box-sizing: border-box;
    display: flex;
    align-items: center;
    gap: 5px;
    padding: 0 6px;
    background: #e2e2e2;
    border: 1px solid #b4b4b4;
    font-size: 12px;
    flex: none;
  }

  .combo svg {
    width: 20px;
    height: 20px;
  }

  .combo .chev {
    margin-left: auto;
    width: 12px;
    height: 12px;
  }

  .sync {
    display: flex;
    align-items: center;
    height: 37px;
    width: 54px;
    margin-left: 2px;
    background: #b8dcf6;
    box-shadow: inset 0 0 0 1px #8cc4f0;
    flex: none;
  }

  .sync .btn {
    width: 39px;
    border-right: 1px solid #8cc4f0;
  }

  .more {
    margin-left: auto;
    margin-right: 3px;
    font-size: 13px;
    color: #666;
  }

  .more.tight {
    margin: 0 5px 0 4px;
  }

  /* main split */
  .main {
    flex: 1;
    min-height: 0;
    display: flex;
  }

  .combo-panel {
    width: 498px;
    flex: none;
    display: flex;
    flex-direction: column;
    padding-top: 2px;
    box-sizing: border-box;
  }

  .dock {
    width: 492px;
    height: 23px;
    flex: none;
    display: flex;
    align-items: center;
    justify-content: space-between;
    box-sizing: border-box;
    padding: 0 6px 0 6px;
    background: #d9d9d9;
    border: 1px solid #bdbdbd;
    font-size: 14.200px;
  }

  .dock svg {
    width: 12px;
    height: 12px;
  }

  .tabs {
    display: flex;
    align-items: flex-end;
    height: 34px;
    padding-left: 4px;
    flex: none;
  }

  .tab {
    width: 68px;
    height: 28px;
    box-sizing: border-box;
    display: flex;
    align-items: center;
    justify-content: center;
    font-size: 12px;
    border: 1px solid #d6d6d6;
    border-bottom: 0;
  }

  .tab.on {
    width: 98px;
    height: 30px;
    background: #fff;
    gap: 6px;
    border-left: 0;
  }

  .tab svg {
    width: 22px;
    height: 22px;
    margin-top: -4px;
  }

  .task-frame {
    width: 484px;
    height: 541px;
    margin-left: 3px;
    box-sizing: border-box;
    display: flex;
    background: #fff;
    border-right: 1px solid #888;
    border-bottom: 1px solid #888;
    padding: 2px 0 0 1px;
    flex: none;
  }

  .task {
    width: 462px;
    overflow: hidden;
    background: linear-gradient(#ababc2, #2f2f62);
    padding: 23px 10px 0;
    box-sizing: border-box;
    flex: none;
  }

  .close {
    display: block;
    width: 90px;
    height: 26px;
    margin: 0 auto 22px;
    padding: 0;
    background: #e1e1e1;
    border: 1px solid #adadad;
    font: inherit;
    font-size: 11.800px;
  }

  .box {
    margin-bottom: 10px;
  }

  .box-head {
    height: 31px;
    display: flex;
    align-items: center;
    box-sizing: border-box;
    padding: 0 5px 0 8px;
    gap: 4px;
    border-radius: 6px 6px 0 0;
    background: linear-gradient(90deg, #fff, #c8d6f6);
    color: #2a5cd0;
    font-weight: 700;
    font-size: 12.300px;
    border-bottom: 1px solid #eef1fb;
  }

  .sheet {
    width: 18px;
    height: 18px;
  }

  .fold {
    margin-left: auto;
    width: 19px;
    height: 19px;
    border-radius: 50%;
    background: #fff;
    border: 1px solid #c3cde8;
    display: flex;
    align-items: center;
    justify-content: center;
  }

  .fold svg {
    width: 12px;
    height: 12px;
  }

  .box-body {
    background: #d6def6;
    border: 1px solid #fff;
    border-top: 0;
    padding: 12px 18px 12px 16px;
    font-size: 11.800px;
  }

  .box-body.second {
    padding-top: 13px;
    padding-bottom: 15px;
  }

  .line {
    height: 23.500px;
    display: flex;
    align-items: center;
    gap: 4px;
  }

  .line a {
    color: #0000e0;
    background: #fff;
  }

  .ok {
    color: #008000;
    background: #e8e8e8;
  }

  .opt {
    min-height: 29px;
    display: flex;
    align-items: center;
    gap: 6px;
  }

  .tall {
    min-height: 38px;
  }

  .spinrow {
    min-height: 34px;
  }

  .opt-in {
    display: flex;
    align-items: center;
    gap: 6px;
  }

  .split {
    justify-content: space-between;
  }

  .muted {
    color: #8a8f9c;
  }

  .cb {
    width: 15px;
    height: 15px;
    background: #fff;
    border: 1px solid #333;
    flex: none;
  }

  .cb.dim {
    border-color: #d8d8d8;
    background: #f2f3f8;
  }

  .update {
    width: 197px;
    height: 27px;
    padding: 0;
    background: #e1e1e1;
    border: 1px solid #adadad;
    font: inherit;
  }

  .spin {
    width: 199px;
    height: 27px;
    margin-right: -1px;
    box-sizing: border-box;
    padding-left: 3px;
    display: flex;
    align-items: center;
    justify-content: space-between;
    background: #eee;
    border: 1px solid #d0d0d0;
  }

  .spin-btns {
    width: 17px;
    margin-right: 3px;
    display: flex;
    flex-direction: column;
    gap: 6px;
    align-items: center;
  }

  .spin-btns i {
    width: 0;
    height: 0;
    border-left: 4px solid transparent;
    border-right: 4px solid transparent;
    border-bottom: 4px solid #777;
  }

  .spin-btns i:last-child {
    border-bottom: 0;
    border-top: 4px solid #777;
  }

  .order {
    margin-top: 3px;
    margin-bottom: 7px;
  }

  .list {
    margin: 0;
    padding: 2px 6px;
    list-style: none;
    background: #fff;
    border: 1px solid #8a8a8a;
    border-bottom: 0;
    font-size: 14px;
  }

  .list li {
    height: 23px;
    line-height: 23px;
  }

  .scroll {
    flex: 1;
    display: flex;
    flex-direction: column;
    background: #f0f0f0;
  }

  .scroll svg,
  .log-scroll svg {
    width: 12px;
    height: 8px;
    margin: 7px auto;
  }

  .thumb {
    height: 177px;
    background: #cdcdcd;
  }

  .scroll .down {
    margin-top: auto;
  }

  /* 3d view */
  .view-col {
    flex: 1;
    display: flex;
    flex-direction: column;
    min-width: 0;
  }

  .viewport {
    position: relative;
    flex: 1;
    min-height: 0;
    border-top: 2px solid #00006e;
    background: linear-gradient(#333366, #9a9ab3);
    overflow: hidden;
  }

  .scene {
    position: absolute;
    inset: 0;
    width: 1422px;
    height: 573px;
  }

  .dim {
    font-family: 'DejaVu Sans', sans-serif;
    font-size: 21px;
    fill: #e03a1a;
    stroke: #e03a1a;
    stroke-width: 0.3px;
  }

  .navi {
    position: absolute;
    left: 1282px;
    top: 4px;
    width: 140px;
    height: 140px;
  }

  .top {
    font-family: 'DejaVu Sans', sans-serif;
    font-size: 16px;
    font-weight: 700;
    letter-spacing: -2px;
  }

  .ax {
    font-family: 'DejaVu Sans', sans-serif;
    font-size: 9px;
  }

  .axes {
    position: absolute;
    left: 1388px;
    top: 518px;
    width: 34px;
    height: 34px;
  }

  .axk {
    font-family: 'DejaVu Sans', sans-serif;
    font-size: 8px;
    fill: #111;
  }

  .doc-tabs {
    height: 35px;
    flex: none;
    border-bottom: 3px solid #bdbdbd;
    box-sizing: border-box;
  }

  .doc-tab {
    width: 177px;
    height: 29px;
    display: flex;
    align-items: center;
    gap: 5px;
    padding-left: 14px;
    box-sizing: border-box;
    background: #fff;
    font-size: 12px;
    box-shadow: 1px 1px 0 #d8d8d8;
  }

  .doc-tab svg {
    width: 22px;
    height: 22px;
  }

  .doc-tab .doc-x {
    width: 17px;
    height: 17px;
    margin-left: 1px;
  }

  /* report */
  .report {
    height: 115px;
    flex: none;
    display: flex;
    flex-direction: column;
  }

  .dock.wide {
    width: 100%;
    height: 27px;
    flex: none;
    padding-right: 7px;
    justify-content: flex-start;
    gap: 0;
  }

  .dock.wide span {
    margin-right: auto;
  }

  .dock.wide svg + svg {
    margin-left: 15px;
  }

  .log {
    flex: 1;
    display: flex;
    min-height: 0;
    background: #fff;
    border-bottom: 1px solid #8a8a8a;
    border-left: 1px solid #8a8a8a;
  }

  .log-text {
    flex: 1;
    overflow: hidden;
    padding-left: 5px;
    color: #f00;
    font-size: 15.700px;
    line-height: 20.300px;
    white-space: nowrap;
  }

  .log-text div:first-child {
    margin-top: -12px;
  }

  .log-scroll {
    width: 20px;
    display: flex;
    flex-direction: column;
    justify-content: space-between;
    background: #f0f0f0;
  }

  .log-scroll svg {
    margin: 5px auto;
  }

  .log-thumb {
    height: 23px;
    margin-top: 20px;
    background: #cdcdcd;
  }

  /* status and taskbar */
  .status {
    height: 37px;
    flex: none;
    display: flex;
    align-items: center;
    justify-content: space-between;
    padding: 0 15px 0 7px;
    font-size: 14.200px;
  }

  .status-right {
    display: flex;
    align-items: center;
    font-size: 12.300px;
  }

  .mouse {
    width: 12px;
    height: 18px;
    margin-right: 7px;
  }

  .blender {
    display: flex;
    align-items: center;
    width: 57px;
    overflow: hidden;
  }

  .blender .arrow {
    margin: 0 0 0 1px;
  }

  .st-sep {
    width: 1px;
    height: 30px;
    margin: 0 5px;
    background: #ccc;
  }

  .taskbar {
    height: 50px;
    flex: none;
    display: flex;
    align-items: center;
    background: linear-gradient(90deg, #212e35 0%, #28343a 50%, #3a332c 63%, #27343a 72%, #22313a 100%);
    color: #fff;
  }

  .start {
    width: 20px;
    height: 20px;
    margin: 0 20px 0 20px;
    flex: none;
  }

  .search {
    width: 430px;
    height: 50px;
    box-sizing: border-box;
    display: flex;
    align-items: center;
    gap: 15px;
    padding-left: 13px;
    background: #f2f2f2;
    color: #333;
    font-size: 17.700px;
    white-space: nowrap;
    overflow: hidden;
    flex: none;
  }

  .search svg {
    width: 22px;
    height: 22px;
    flex: none;
  }

  .apps {
    display: flex;
    height: 50px;
    margin-left: 2px;
  }

  .app-i {
    width: 62px;
    height: 50px;
    display: flex;
    align-items: center;
    justify-content: center;
    flex: none;
    box-sizing: border-box;
  }

  .app-i svg {
    width: 34px;
    height: 34px;
  }

  .app-i .wd,
  .app-i .mp {
    fill: #fff;
    font-family: 'Liberation Sans', sans-serif;
    font-weight: 700;
    font-size: 12px;
  }

  .player {
    background: linear-gradient(90deg, #7c7c3c 11px, #38464c 11px);
    border-bottom: 3px solid #ffe600;
    width: 51px;
    margin-left: 7px;
    margin-right: 6px;
  }

  .fc {
    background: #4a575c;
    border-bottom: 3px solid #76b9ed;
  }

  .tray {
    margin-left: auto;
    display: flex;
    align-items: center;
    padding-right: 16px;
    font-size: 13.500px;
  }

  .tr-caret {
    width: 14px;
    height: 14px;
    margin-right: 15px;
  }

  .tr-usb {
    width: 14px;
    height: 24px;
    margin-right: 13px;
  }

  .tr-net {
    width: 22px;
    height: 22px;
    margin-right: 8px;
  }

  .tr-vol {
    width: 22px;
    height: 22px;
    margin-right: 12px;
  }

  .lang {
    margin-right: 20px;
  }

  .clock {
    display: flex;
    flex-direction: column;
    align-items: center;
    gap: 3px;
    line-height: 20px;
  }

  /* annotations */
  .mark {
    position: absolute;
    border: 4px solid #ed1c24;
    box-sizing: border-box;
    pointer-events: none;
  }

  .box-1 {
    left: 1057px;
    top: 182px;
    width: 44px;
    height: 60px;
  }

  .box-4 {
    left: 1700px;
    top: 184px;
    width: 49px;
    height: 55px;
  }

  .cap4-strip {
    position: absolute;
    left: 1698px;
    top: 175px;
    width: 42px;
    height: 10px;
    background: #fff;
    border-top: 2px solid #ed1c24;
    box-sizing: border-box;
  }

  .num {
    position: absolute;
    font-family: 'Open Sans', sans-serif;
    font-weight: 700;
    font-size: 28px;
    line-height: 36px;
    color: #ed1c24;
  }

  :global(.doft) {
    font-family: 'Liberation Sans', sans-serif;
    font-size: 11px;
    fill: #3a5ab8;
  }
</style>
